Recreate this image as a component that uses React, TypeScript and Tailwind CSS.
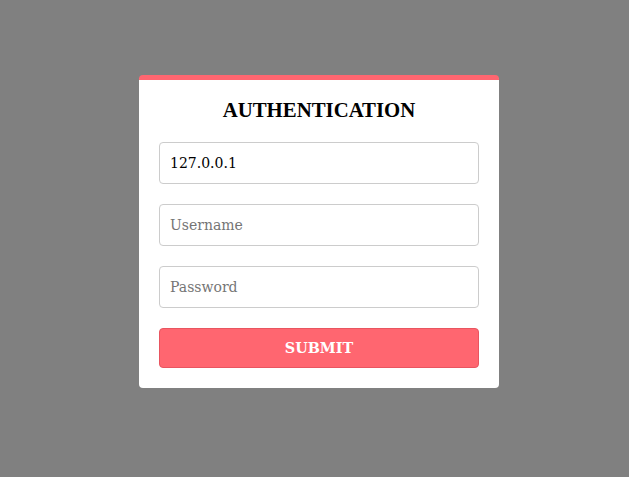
import React from "react";

export default function App() {
  return (
    <div className="min-h-[477px] w-full bg-[#808080] pt-[75px]">
      <div className="ml-[139px] w-[360px] rounded-[4px] border-t-[5px] border-[#ff6670] bg-white px-5 pb-5 pt-[16px]">
        <h1 className="text-center text-[20.8px] font-bold leading-[28px] text-black [font-family:'Liberation_Serif',serif]">
          AUTHENTICATION
        </h1>
        <div className="mt-[18px] flex flex-col gap-5">
          <input
            defaultValue="127.0.0.1"
            className="h-[42px] w-full rounded-[4px] border border-[#cccccc] bg-white px-[10px] text-[14px] text-black outline-none [font-family:'DejaVu_Serif',serif]"
          />
          <input
            placeholder="Username"
            className="h-[42px] w-full rounded-[4px] border border-[#cccccc] bg-white px-[10px] text-[14px] text-black outline-none placeholder:text-[#757575] [font-family:'DejaVu_Serif',serif]"
          />
          <input
            type="password"
            placeholder="Password"
            className="h-[42px] w-full rounded-[4px] border border-[#cccccc] bg-white px-[10px] text-[14px] text-black outline-none placeholder:text-[#757575] [font-family:'DejaVu_Serif',serif]"
          />
          <button className="h-[40px] w-full rounded-[4px] border border-[#e85560] bg-[#ff6670] text-[14.4px] font-bold text-white [font-family:'DejaVu_Serif',serif]">
            SUBMIT
          </button>
        </div>
      </div>
    </div>
  );
}
